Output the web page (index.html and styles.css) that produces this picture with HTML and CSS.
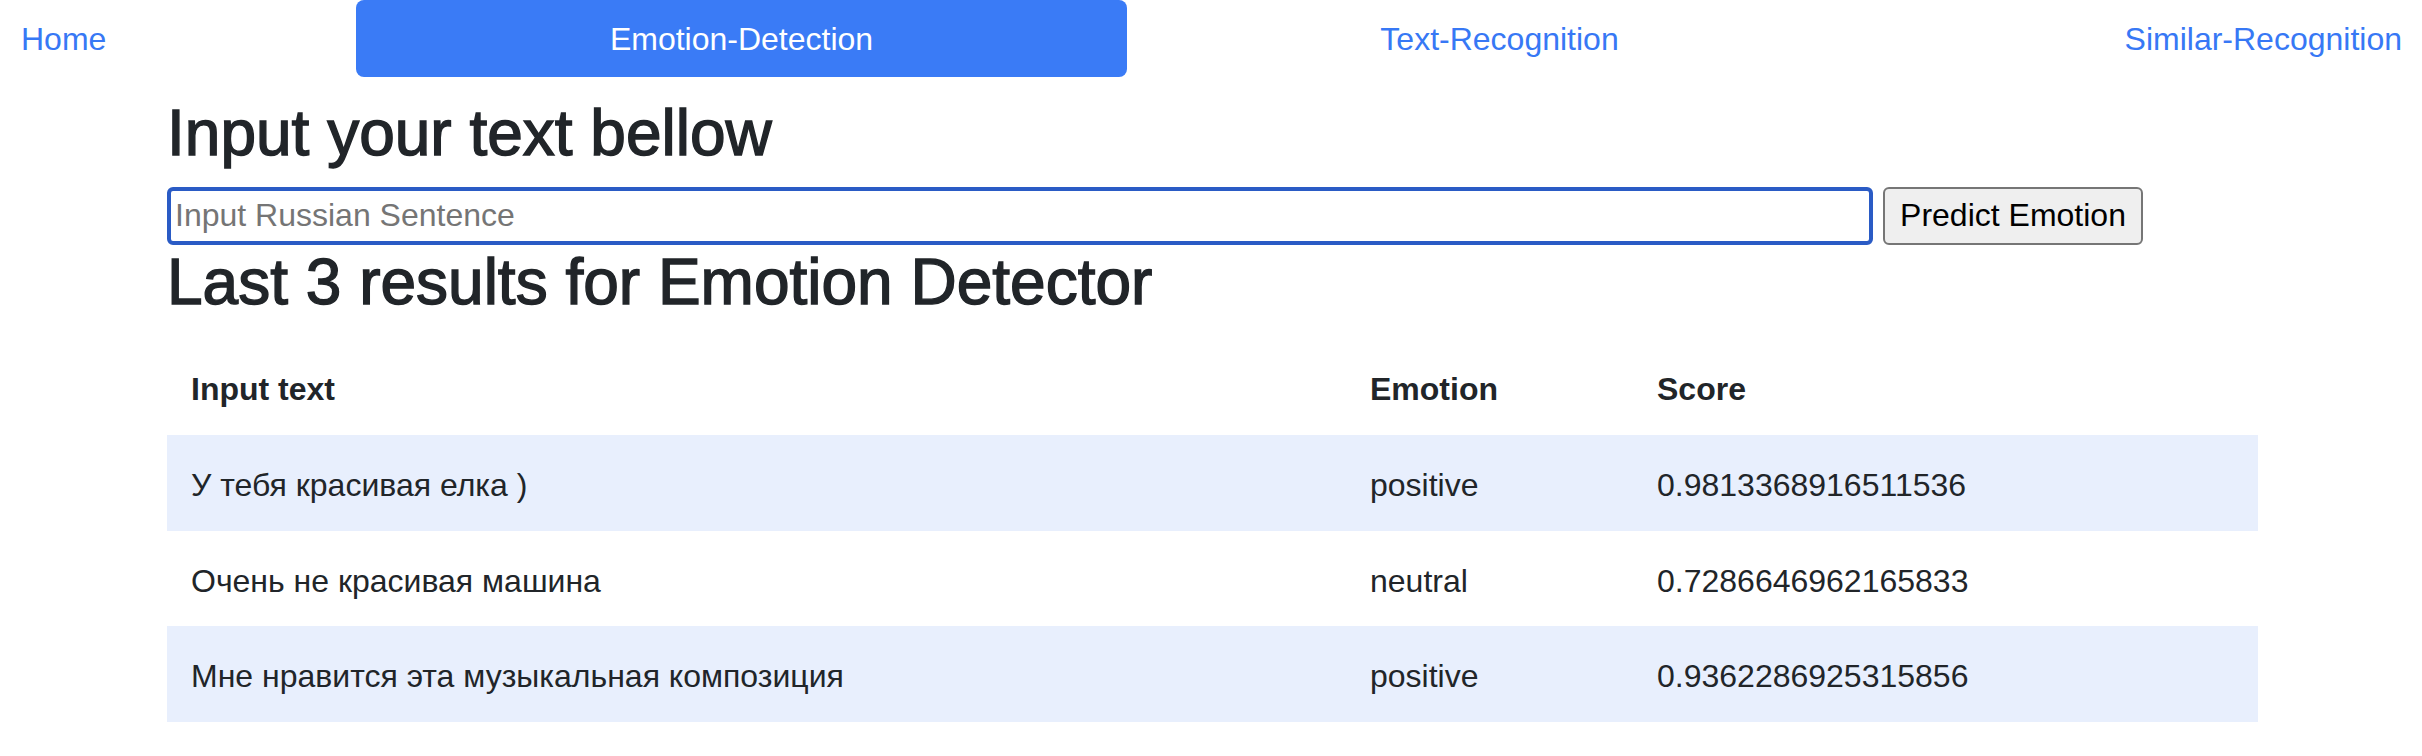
FILE: index.html
```html
<!DOCTYPE html>
<html lang="ru">
<head>
<meta charset="utf-8">
<title>Emotion Detection</title>
<link rel="stylesheet" href="styles.css">
</head>
<body>
<nav class="nav">
  <a class="nav-link nav-home" href="#">Home</a>
  <a class="nav-link nav-active" href="#">Emotion-Detection</a>
  <a class="nav-link nav-center" href="#">Text-Recognition</a>
  <a class="nav-link nav-right" href="#">Similar-Recognition</a>
</nav>
<main class="container">
  <h2 class="title">Input your text bellow</h2>
  <form class="predict-form">
    <input class="text-input" type="text" placeholder="Input Russian Sentence">
    <button class="predict-btn" type="button">Predict Emotion</button>
  </form>
  <h2 class="title">Last 3 results for Emotion Detector</h2>
  <table class="results">
    <thead>
      <tr>
        <th class="col-text">Input text</th>
        <th class="col-emotion">Emotion</th>
        <th class="col-score">Score</th>
      </tr>
    </thead>
    <tbody>
      <tr class="striped">
        <td>У тебя красивая елка )</td>
        <td>positive</td>
        <td>0.9813368916511536</td>
      </tr>
      <tr>
        <td>Очень не красивая машина</td>
        <td>neutral</td>
        <td>0.7286646962165833</td>
      </tr>
      <tr class="striped">
        <td>Мне нравится эта музыкальная композиция</td>
        <td>positive</td>
        <td>0.9362286925315856</td>
      </tr>
    </tbody>
  </table>
</main>
</body>
</html>
```

FILE: styles.css
```css
* {
  box-sizing: border-box;
}

html, body {
  margin: 0;
  padding: 0;
  background: #ffffff;
}

body {
  font-family: "Liberation Sans", Arial, sans-serif;
  font-size: 32px;
  line-height: 48px;
  color: #212529;
}

.nav {
  display: grid;
  grid-template-columns: 356px 771px 745px 1fr;
  height: 77px;
  margin-bottom: 19px;
}

.nav-link {
  display: flex;
  align-items: center;
  justify-content: center;
  color: #3778f5;
  text-decoration: none;
  font-size: 32px;
  line-height: 48px;
}

.nav-home {
  justify-content: flex-start;
  padding-left: 21px;
}

.nav-active {
  background: #3a7bf6;
  color: #ffffff;
  border-radius: 8px;
}

.nav-right {
  justify-content: flex-end;
  padding-right: 20px;
}

.container {
  width: 2091px;
  margin-left: 167px;
}

.title {
  font-size: 64px;
  line-height: 75.6px;
  font-weight: 500;
  margin: 0 0 15px 0;
  -webkit-text-stroke: 1.4px #212529;
}

.predict-form {
  display: flex;
  gap: 10px;
  margin: 0;
}

.text-input {
  width: 1706px;
  height: 58px;
  border: 4px solid #2a5bc5;
  border-radius: 6px;
  padding: 0 4px;
  font-family: "Liberation Sans", Arial, sans-serif;
  font-size: 32px;
  color: #000000;
  outline: none;
  background: #ffffff;
}

.text-input::placeholder {
  color: #757575;
}

.predict-btn {
  width: 260px;
  height: 58px;
  background: #efefef;
  border: 2px solid #767676;
  border-radius: 6px;
  font-family: "Liberation Sans", Arial, sans-serif;
  font-size: 32px;
  color: #000000;
  padding: 0 12px;
}

.results {
  width: 100%;
  border-collapse: collapse;
  table-layout: fixed;
  margin-top: 19px;
}

.results th,
.results td {
  padding: 27px 24px 21px 24px;
  text-align: left;
  vertical-align: top;
  line-height: 47.7px;
}

.results th {
  font-weight: 700;
}

.col-text {
  width: 1179px;
}

.col-emotion {
  width: 287px;
}

.striped {
  background: #e8effd;
}
```
